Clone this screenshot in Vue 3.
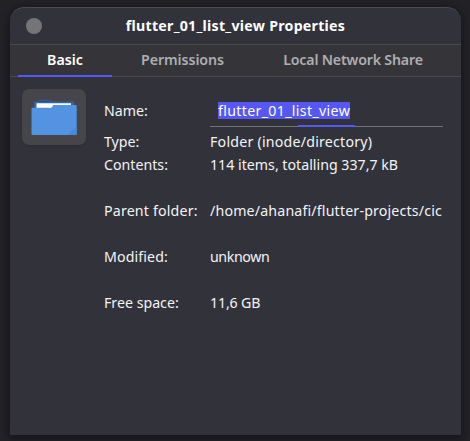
<script setup>
const tabs = [
  { id: 'basic', label: 'Basic', active: true },
  { id: 'permissions', label: 'Permissions' },
  { id: 'share', label: 'Local Network Share' },
]
const rows = [
  { id: 'type', label: 'Type:', value: 'Folder (inode/directory)' },
  { id: 'contents', label: 'Contents:', value: '114 items, totalling 337,7 kB' },
  { id: 'parent', label: 'Parent folder:', value: '/home/ahanafi/flutter-projects/cic' },
  { id: 'modified', label: 'Modified:', value: 'unknown' },
  { id: 'free', label: 'Free space:', value: '11,6 GB' },
]
</script>

<template>
  <div class="desktop">
    <section class="window">
      <header class="titlebar">
        <button class="close" aria-label="Close"></button>
        <h1>flutter_01_list_view Properties</h1>
      </header>
      <nav class="tabs">
        <button v-for="t in tabs" :key="t.id" class="tab" :class="[t.id, { active: t.active }]">{{ t.label }}</button>
      </nav>
      <main class="content">
        <div class="icon-button">
          <svg width="64" height="56" viewBox="0 0 64 56">
            <path d="M12 13.500q0-1 1-1h3l1.500-1.800h10.500l1.500 1.800h21.500q1 0 1 1v9H12z" fill="#3465a4" />
            <path d="M17 11.500h11v1.500H17z" fill="#265087" />
            <path d="M14.500 14.300h34.500v7H14.500z" fill="#fff" />
            <path d="M9.500 19.500q0-.7.800-.7h18.400q1.200 0 1.700-1.400.5-1.400 1.500-1.400H53.700q1 0 1 1v28q0 1-1 1H10.500q-1 0-1-1z" fill="#5294e2" />
            <path d="M54.700 37v8q0 1-1 1H46z" fill="#4a89d3" />
          </svg>
        </div>
        <dl class="props">
          <div class="row name">
            <dt>Name:</dt>
            <dd class="field"><span class="selected">flutter_01_list_view</span></dd>
          </div>
          <div v-for="r in rows" :key="r.id" class="row" :class="r.id">
            <dt>{{ r.label }}</dt>
            <dd>{{ r.value }}</dd>
          </div>
        </dl>
      </main>
    </section>
  </div>
</template>

<style>
body { background: #232227; }
</style>

<style scoped>
* { box-sizing: border-box; }
.desktop {
  width: 470px; height: 441px; padding: 7px 9px 6px 10px; overflow: hidden;
  background: #232227;
  font-family: "Noto Sans", "Open Sans", sans-serif; font-size: 14.2px; color: #f4f4f5;
}
.window {
  height: 428px; display: flex; flex-direction: column; overflow: hidden;
  background: #32323b; border-radius: 14px 14px 0 0;
  box-shadow: 0 2px 10px 2px rgba(0, 0, 0, .38);
}
.titlebar {
  flex: none; height: 37px; display: flex; align-items: center; padding: 0 16px;
  border-top: 1px solid #4a4a50; border-radius: 14px 14px 0 0;
}
.close { width: 16px; height: 16px; padding: 0; border: 0; border-radius: 50%; background: #757479; }
h1 {
  flex: 1; margin: 0 16px 0 0; text-align: center; white-space: nowrap;
  font-size: 14.2px; font-weight: 700; line-height: 20px; letter-spacing: .26px; color: #fff;
}
.tabs {
  flex: none; height: 33px; display: flex; padding-left: 8px;
  background: #353539; border-top: 1px solid #48484d; border-bottom: 1px solid #48484d;
}
.tab {
  height: 32px; padding: 0 0 1px; border: 0; border-bottom: 2px solid transparent;
  background: none; color: #aeaeb1; font: 600 14.2px "Noto Sans", sans-serif; white-space: nowrap;
}
.tab.active { color: #fff; border-bottom-color: #5657f5; }
.tab.basic { width: 94px; }
.tab.permissions { width: 141px; letter-spacing: -.05px; }
.tab.share { width: 200px; letter-spacing: -.18px; }
.content { display: flex; gap: 18px; padding: 12px 16px 0 12px; }
.icon-button {
  flex: none; width: 64px; height: 56px; border-radius: 7px; background: #45454a;
  box-shadow: 0 1px 2px rgba(0, 0, 0, .15);
}
.icon-button svg { display: block; }
.props { margin: 0; width: 339px; }
.row { display: flex; height: 23px; line-height: 23px; white-space: nowrap; }
.row.name { height: 38px; margin-bottom: 3px; }
.row.contents, .row.parent, .row.modified { height: 46px; }
dt { flex: none; width: 106px; }
dd { flex: none; margin: 0; }
.type dd { letter-spacing: .22px; }
.parent dt { letter-spacing: .18px; }
.parent dd { letter-spacing: .17px; }
.modified dt { letter-spacing: .12px; }
.modified dd { letter-spacing: -.4px; }
.free dd { letter-spacing: -.15px; }
.name dt { line-height: 43px; }
.field {
  width: 233px; height: 38px; padding: 13px 0 0 8px;
  background: linear-gradient(#5657f5, #5657f5) 88px 100% / 57px 2px no-repeat,
    linear-gradient(#737378, #737378) 0 100% / 100% 1px no-repeat;
}
.selected {
  display: block; width: 132px; height: 17px; line-height: 17px;
  letter-spacing: .33px; background: #5657f5; color: #fff;
}
</style>
